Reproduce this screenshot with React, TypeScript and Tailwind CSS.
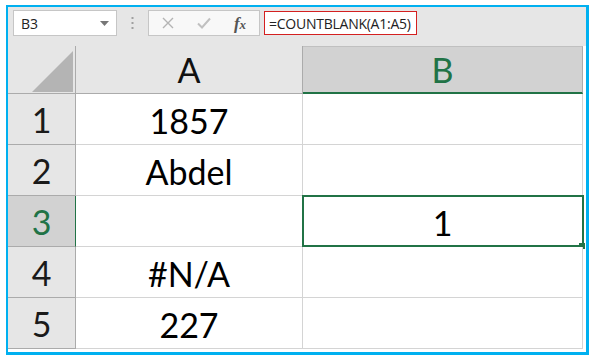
import React from "react";

const font = { fontFamily: "Lato, 'Open Sans', sans-serif" };

function Row({ n, a, b, selected }: { n: string; a: string; b: string; selected?: boolean }) {
  return (
    <>
      <div
        className={
          "flex items-center justify-center border-b border-r h-[51px] text-[34px] " +
          (selected
            ? "bg-[#d2d2d2] text-[#217346] border-r-[#217346] border-b-[#ababab]"
            : "bg-[#e6e6e6] text-[#1a1a1a] border-[#ababab]")
        }
      >
        {n}
      </div>
      <div className="flex items-center justify-center pt-[2px] border-b border-r border-[#d4d4d4] h-[51px] bg-white text-[34px] text-black">
        {a}
      </div>
      <div className="relative flex items-center justify-center pt-[2px] border-b border-r border-[#d4d4d4] h-[51px] bg-white text-[34px] text-black">
        {b}
        {selected && (
          <>
            <div className="absolute left-[-1px] top-[-1px] right-[-2px] bottom-[-1px] border-2 border-[#217346]" />
            <div className="absolute right-[-3px] bottom-[-3px] w-[6px] h-[6px] bg-[#217346]" />
          </>
        )}
      </div>
    </>
  );
}

export default function App() {
  return (
    <div className="w-[595px] h-[362px] bg-white relative overflow-hidden" style={font}>
      <div className="absolute left-[6px] top-[5px] w-[583px] h-[350px] border-[3px] border-l-2 border-t-2 border-[#00b0f0] bg-white flex flex-col">
        {/* toolbar */}
        <div className="h-[39px] bg-[#e6e6e6] flex items-start pt-[3px] pl-[5px]">
          <div className="w-[104px] h-[26px] bg-white border border-[#c6c6c6] flex items-center justify-between pl-[7px] pr-[7px]">
            <span className="text-[14px] text-[#222]" style={{ fontFamily: "'Open Sans', sans-serif" }}>B3</span>
            <svg width="9" height="5" viewBox="0 0 9 5"><path d="M0 0 L9 0 L4.5 5 Z" fill="#777" /></svg>
          </div>
          <div className="w-[31px] h-[26px] flex items-center justify-center">
            <svg width="3" height="12" viewBox="0 0 3 12">
              <rect x="0.5" y="0" width="2" height="2" fill="#a0a0a0" />
              <rect x="0.5" y="5" width="2" height="2" fill="#a0a0a0" />
              <rect x="0.5" y="10" width="2" height="2" fill="#a0a0a0" />
            </svg>
          </div>
          <div className="w-[112px] h-[26px] bg-[#f8f8f8] border border-[#c6c6c6] flex items-center">
            <div className="w-[37px] flex justify-center">
              <svg width="12" height="12" viewBox="0 0 12 12"><path d="M1 1 L11 11 M11 1 L1 11" stroke="#b4b4b4" strokeWidth="1.4" /></svg>
            </div>
            <div className="w-[36px] flex justify-center">
              <svg width="14" height="12" viewBox="0 0 14 12"><path d="M1 6.5 L5 10.5 L13 1.5" stroke="#c0c0c0" strokeWidth="2" fill="none" /></svg>
            </div>
            <div className="w-[36px] flex justify-center">
              <span className="text-[17px] italic font-bold text-[#555] leading-none" style={{ fontFamily: "'Liberation Serif', serif" }}>
                f<span className="text-[13px]">x</span>
              </span>
            </div>
          </div>
          <div className="ml-[4px] mt-[1px] h-[24px] bg-white border border-[#d42020] flex items-center pl-[4px] pr-[5px]">
            <span className="text-[14px] text-[#222]" style={{ fontFamily: "'Open Sans', sans-serif", letterSpacing: "-0.25px" }}>=COUNTBLANK(A1:A5)</span>
          </div>
        </div>
        {/* grid */}
        <div className="grid grid-cols-[68px_227px_280px] bg-white">
          <div className="relative h-[48px] bg-[#e6e6e6] border-r border-[#ababab] border-b border-b-[#ababab]">
            <svg className="absolute left-[24px] top-[5px]" width="41" height="41" viewBox="0 0 41 41">
              <path d="M41 0 L41 41 L0 41 Z" fill="#b4b4b4" />
            </svg>
          </div>
          <div className="h-[48px] bg-[#e6e6e6] border-r border-b border-[#ababab] flex items-center justify-center text-[34px] text-[#111]">
            A
          </div>
          <div className="h-[48px] bg-[#d2d2d2] border-t border-t-[#c0c0c0] border-r border-r-[#ababab] border-b-2 border-b-[#217346] flex items-center justify-center text-[34px] text-[#217346]">
            B
          </div>
          <Row n="1" a="1857" b="" />
          <Row n="2" a="Abdel" b="" />
          <Row n="3" a="" b="1" selected />
          <Row n="4" a="#N/A" b="" />
          <Row n="5" a="227" b="" />
        </div>
      </div>
    </div>
  );
}
